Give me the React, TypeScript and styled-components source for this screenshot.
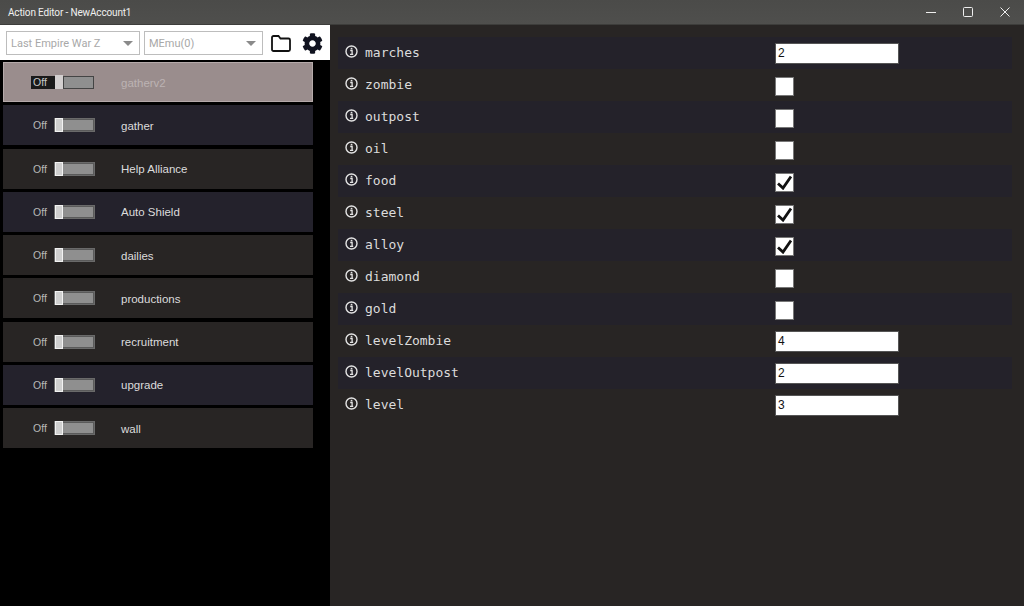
import React from "react";
import styled, { createGlobalStyle } from "styled-components";

const Global = createGlobalStyle`
  html, body { margin: 0; padding: 0; height: 100%; background: #000; overflow: hidden; }
  #root { height: 100%; }
`;

const Windowed = styled.div`
  width: 1024px; height: 606px; display: flex; flex-direction: column;
  font-family: "Liberation Sans", Arial, sans-serif;
`;
const TitleBar = styled.header`
  height: 25px; flex: none; box-sizing: border-box; display: flex; align-items: center;
  background: linear-gradient(#4b4b49, #4f4f4d); border-bottom: 1px solid #3d3d3b; padding: 0 1px 0 8px; color: #f0f0f0;
  font-family: Roboto, sans-serif; font-size: 10px; letter-spacing: -0.15px;
`;
const Title = styled.span` flex: 1; `;
const WinButton = styled.button`
  width: 37px; height: 24px; padding: 0; border: 0; background: none; display: flex; align-items: center; justify-content: center;
  svg { display: block; }
`;
const Body = styled.div` flex: 1; display: flex; min-height: 0; `;
const Sidebar = styled.aside` width: 330px; flex: none; background: #000; display: flex; flex-direction: column; `;
const Toolbar = styled.div`
  height: 35px; background: #fff; box-sizing: border-box; display: flex; align-items: center; padding: 1px 0 0 6px; gap: 4px;
`;
const Select = styled.div<{ $w: number }>`
  width: ${p => p.$w}px; flex: none; height: 24px; box-sizing: border-box; border: 1px solid #bdbdbd; background: #fff;
  display: flex; align-items: center; justify-content: space-between; padding: 0 6px 0 4px;
  color: #a8a8a8; font-family: Roboto, sans-serif; font-size: 11px;
`;
const Caret = styled.i`
  width: 0; height: 0; border-left: 5px solid transparent; border-right: 5px solid transparent; border-top: 5px solid #8a8a8a;
`;
const IconButton = styled.div<{ $ml: number }>` margin-left: ${p => p.$ml}px; display: flex; svg { display: block; } `;
const ActionList = styled.div` display: flex; flex-direction: column; padding: 2px 0 0 3px; gap: 3.25px; `;
const ActionRow = styled.div<{ $bg: string; $selected?: boolean }>`
  width: 310px; height: 40px; box-sizing: border-box; display: flex; align-items: center; background: ${p => p.$bg};
  border: 1px solid ${p => (p.$selected ? "#b5aaaa" : "transparent")}; font-size: 11.5px;
`;
const OffLabel = styled.span`
  box-sizing: border-box; width: 50px; padding-left: 29px;
  font-size: 10.5px; color: #b8b8b8; line-height: 14px;
`;
const Toggle = styled.div`
  width: 41px; height: 14px; box-sizing: border-box; border: 1px solid #6a6a6a; background: #8f8f8f; display: flex; position: relative;
  box-shadow: inset 0 0 0 1px #5a5a5a;
`;
const SelectedToggle = styled.div`
  display: flex; align-items: center; height: 14px; margin-left: 27px; width: 64px;
`;
const OffChip = styled.span`
  width: 24px; height: 13px; background: #1a1a1a; color: #c8c8c8; font-size: 10.5px; line-height: 13px; padding-left: 2px; box-sizing: border-box;
`;
const SelThumb = styled.span` width: 8px; height: 14px; background: #d3cfcf; `;
const SelTrack = styled.span` width: 31px; height: 13px; box-sizing: border-box; background: #8f8f8f; border: 1px solid #444; `;
const Thumb = styled.span`
  position: absolute; left: 0; top: -1px; width: 8px; height: 14px; box-sizing: border-box; background: #cfcfcf; border: 1px solid #f2f2f2;
`;
const ActionName = styled.span<{ $selected?: boolean }>`
  margin: 1px 0 0 26px; color: ${p => (p.$selected ? "#bcb3b3" : "#dcdcdc")};
`;
const Content = styled.main`
  flex: 1; background: #282524; padding: 12px 12px 0 8px; display: flex; flex-direction: column;
`;
const ParamRow = styled.div<{ $dark: boolean }>`
  height: 32px; display: flex; align-items: center; background: ${p => (p.$dark ? "#24222a" : "#282524")};
`;
const InfoIcon = styled.svg` width: 13px; height: 13px; margin: -3px 7px 0 7px; flex: none; `;
const ParamName = styled.span`
  width: 410px; margin-top: -2px; font-family: "DejaVu Sans Mono", monospace; font-size: 13px; color: #dcdcdc;
`;
const TextInput = styled.div`
  width: 124px; height: 21px; background: #fff; box-sizing: border-box; border: 1px solid #555; color: #111;
  font-size: 12px; line-height: 18px; padding-left: 2px;
`;
const CheckBox = styled.div`
  width: 19px; height: 19px; margin-top: 2px; background: #fff; box-sizing: border-box; border: 1px solid #777; display: flex; align-items: center; justify-content: center;
`;

const rows = ["gatherv2", "gather", "Help Alliance", "Auto Shield", "dailies", "productions", "recruitment", "upgrade", "wall"];
const rowBg = ["#9a8d8d", "#24222c", "#282524", "#24222c", "#282524", "#282524", "#282524", "#24222c", "#282524"];
type P = { name: string; value?: string; checked?: boolean };
const params: P[] = [
  { name: "marches", value: "2" }, { name: "zombie" }, { name: "outpost" }, { name: "oil" },
  { name: "food", checked: true }, { name: "steel", checked: true }, { name: "alloy", checked: true },
  { name: "diamond" }, { name: "gold" },
  { name: "levelZombie", value: "4" }, { name: "levelOutpost", value: "2" }, { name: "level", value: "3" },
];

export default function App() {
  return (
    <Windowed>
      <Global />
      <TitleBar>
        <Title>Action Editor - NewAccount1</Title>
        <WinButton aria-label="min"><svg width="10" height="10"><path d="M0 5.5h10" stroke="#eee" /></svg></WinButton>
        <WinButton aria-label="max"><svg width="10" height="10"><rect x=".5" y=".5" width="9" height="9" rx="1" fill="none" stroke="#eee" /></svg></WinButton>
        <WinButton aria-label="close"><svg width="10" height="10"><path d="M.5.5l9 9M9.5.5l-9 9" stroke="#eee" /></svg></WinButton>
      </TitleBar>
      <Body>
        <Sidebar>
          <Toolbar>
            <Select $w={134}>Last Empire War Z<Caret /></Select>
            <Select $w={119}>MEmu(0)<Caret /></Select>
            <IconButton $ml={4}>
              <svg width="20" height="17" viewBox="0 0 20 17"><path d="M1 2.5a1.5 1.5 0 0 1 1.5-1.5h5l2 2.5h8a1.5 1.5 0 0 1 1.5 1.5v9.500a1.500 1.500 0 0 1-1.500 1.500h-15a1.500 1.500 0 0 1-1.500-1.500z" fill="none" stroke="#111" strokeWidth="1.8" /></svg>
            </IconButton>
            <IconButton $ml={7}>
              <svg width="21" height="21" viewBox="0 0 512 512"><path fill="#10121f" d="M487.4 315.7l-42.6-24.6c4.3-23.2 4.3-47 0-70.2l42.6-24.6c4.9-2.8 7.1-8.6 5.5-14-11.1-35.6-30-67.8-54.7-94.6-3.8-4.1-10-5.1-14.8-2.3L380.8 110c-17.9-15.4-38.5-27.3-60.8-35.1V25.8c0-5.6-3.9-10.5-9.4-11.7-36.7-8.2-74.3-7.8-109.2 0-5.5 1.2-9.4 6.1-9.4 11.7V75c-22.2 7.9-42.8 19.8-60.8 35.1L88.7 85.5c-4.9-2.8-11-1.9-14.8 2.3-24.7 26.7-43.6 58.9-54.7 94.6-1.7 5.4.6 11.2 5.5 14L67.3 221c-4.3 23.2-4.3 47 0 70.2l-42.6 24.6c-4.9 2.8-7.1 8.6-5.5 14 11.1 35.6 30 67.8 54.7 94.6 3.8 4.1 10 5.1 14.8 2.3l42.6-24.6c17.9 15.4 38.5 27.3 60.8 35.1v49.2c0 5.6 3.9 10.5 9.4 11.7 36.7 8.2 74.3 7.8 109.2 0 5.5-1.2 9.4-6.1 9.4-11.7v-49.2c22.2-7.9 42.8-19.8 60.8-35.1l42.6 24.6c4.9 2.8 11 1.9 14.8-2.3 24.7-26.7 43.6-58.9 54.7-94.6 1.5-5.5-.7-11.3-5.6-14.1zM256 336c-44.1 0-80-35.9-80-80s35.9-80 80-80 80 35.9 80 80-35.9 80-80 80z" /></svg>
            </IconButton>
          </Toolbar>
          <ActionList>
            {rows.map((r, i) => (
              <ActionRow key={r} $bg={rowBg[i]} $selected={i === 0}>
                {i === 0 ? (
                  <SelectedToggle><OffChip>Off</OffChip><SelThumb /><SelTrack /></SelectedToggle>
                ) : (
                  <>
                    <OffLabel>Off</OffLabel>
                    <Toggle><Thumb /></Toggle>
                  </>
                )}
                <ActionName $selected={i === 0}>{r}</ActionName>
              </ActionRow>
            ))}
          </ActionList>
        </Sidebar>
        <Content>
          {params.map((p, i) => (
            <ParamRow key={p.name} $dark={i % 2 === 0}>
              <InfoIcon viewBox="0 0 13 13">
                <circle cx="6.5" cy="6.5" r="5.5" fill="none" stroke="#e4e4e4" strokeWidth="1.4" />
                <path d="M5.2 5.5h1.9v3.6M5 9.4h3.2" fill="none" stroke="#e4e4e4" strokeWidth="1.3" />
                <rect x="5.7" y="2.8" width="1.7" height="1.6" fill="#e4e4e4" />
              </InfoIcon>
              <ParamName>{p.name}</ParamName>
              {p.value !== undefined ? (
                <TextInput>{p.value}</TextInput>
              ) : (
                <CheckBox>
                  {p.checked && <svg width="15" height="15" viewBox="0 0 15 15"><path d="M1 8.5l5 4.6L14 1.5" fill="none" stroke="#111" strokeWidth="2.8" /></svg>}
                </CheckBox>
              )}
            </ParamRow>
          ))}
        </Content>
      </Body>
    </Windowed>
  );
}
